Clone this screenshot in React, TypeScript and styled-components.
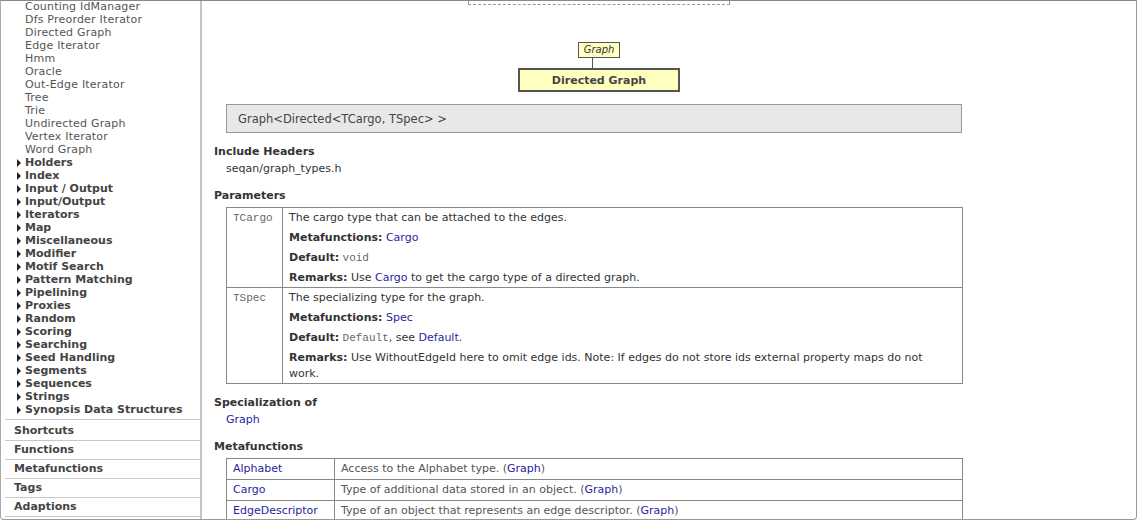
import React from "react";
import styled, { createGlobalStyle } from "styled-components";

const GlobalStyle = createGlobalStyle`
  html, body {
    margin: 0;
    padding: 0;
    background: #fff;
  }
  body {
    font-family: "DejaVu Sans", Verdana, sans-serif;
    font-size: 11px;
    color: #333;
  }
`;

const Frame = styled.div`
  box-sizing: border-box;
  width: 1137px;
  height: 520px;
  display: flex;
  border-top: 1px solid #888;
  border-left: 1px solid #aaa;
  border-right: 1px solid #999;
  border-bottom: 1px solid #999;
  border-radius: 0 0 4px 4px;
  overflow: hidden;
`;

const Sidebar = styled.nav`
  flex: 0 0 199px;
  border-right: 2px solid #c4c4c4;
  overflow: hidden;
  margin-top: -1px;
`;

const TreeList = styled.ul`
  list-style: none;
  margin: 0;
  padding: 0;
`;

const Leaf = styled.li`
  line-height: 13px;
  height: 13px;
  padding-left: 24px;
  color: #555;
  white-space: nowrap;
  letter-spacing: 0.2px;
`;

const Category = styled.li`
  display: flex;
  align-items: center;
  gap: 4px;
  line-height: 13px;
  height: 13px;
  padding-left: 16px;
  color: #444;
  font-weight: bold;
  white-space: nowrap;
`;

const Arrow = styled.span`
  width: 0;
  height: 0;
  border-left: 4px solid #222;
  border-top: 4px solid transparent;
  border-bottom: 4px solid transparent;
`;

const SectionList = styled.ul`
  list-style: none;
  margin: 3px 0 0 4px;
  padding: 1px 0 0;
  border-top: 1px solid #c8c8c8;
`;

const Section = styled.li<{ $first?: boolean }>`
  height: ${({ $first }) => ($first ? 19 : 18)}px;
  line-height: ${({ $first }) => ($first ? 19 : 18)}px;
  padding-left: 9px;
  border-bottom: 1px solid #c8c8c8;
  color: #444;
  font-weight: bold;
`;

const Main = styled.main`
  flex: 1;
  overflow: hidden;
  padding: 0 0 0 12px;
`;

const Diagram = styled.div`
  width: 746px;
  margin-left: 12px;
  display: flex;
  flex-direction: column;
  align-items: center;
`;

const DashedStub = styled.div`
  width: 260px;
  height: 3px;
  border: 1px dashed #999;
  border-top: none;
  margin-bottom: 37px;
`;

const SmallNode = styled.div`
  background: #ffffc0;
  border: 1px solid #555;
  font-style: italic;
  font-size: 10px;
  line-height: 14px;
  padding: 0 5px;
  color: #333;
`;

const Connector = styled.div`
  width: 1px;
  height: 10px;
  background: #555;
  transform: translateX(-7px);
`;

const MainNode = styled.div`
  box-sizing: border-box;
  width: 162px;
  height: 24px;
  background: #ffffc0;
  border: 2px solid #555;
  font-weight: bold;
  color: #444;
  display: flex;
  align-items: center;
  justify-content: center;
`;

const Signature = styled.div`
  box-sizing: border-box;
  width: 736px;
  height: 29px;
  margin: 12px 0 0 12px;
  padding: 0 11px;
  background: #e8e8e8;
  border: 1px solid #999;
  color: #444;
  display: flex;
  align-items: center;
  font-size: 11.5px;
`;

const Heading = styled.h3<{ $top: number }>`
  margin: ${({ $top }) => $top}px 0 0;
  font-size: 11px;
  line-height: 14px;
  font-weight: bold;
  color: #333;
`;

const Indented = styled.div`
  margin: 3px 0 0 12px;
  line-height: 14px;
  color: #333;
`;

const Link = styled.a`
  color: #1f1f9e;
  text-decoration: none;
`;

const Table = styled.table`
  width: 737px;
  margin: 4px 0 0 12px;
  border-collapse: collapse;
`;

const NameCell = styled.td<{ $w: number }>`
  width: ${({ $w }) => $w}px;
  vertical-align: top;
  border: 1px solid #888;
  padding: 2px 6px 1px;
  line-height: 16px;
`;

const DescCell = styled.td`
  vertical-align: top;
  border: 1px solid #888;
  padding: 2px 6px 1px;
  line-height: 16px;
  color: #333;
`;

const Mono = styled.span`
  font-family: "Liberation Mono", "Courier New", monospace;
  font-size: 11px;
  color: #666;
`;

const Para = styled.div`
  margin-bottom: 4px;
  &:last-child {
    margin-bottom: 0;
  }
`;

const Label = styled.b`
  color: #333;
`;

const MfName = styled.td`
  width: 95px;
  border: 1px solid #888;
  padding: 0 6px;
  height: 20px;
  line-height: 20px;
`;

const MfDesc = styled.td`
  border: 1px solid #888;
  padding: 0 6px;
  height: 20px;
  line-height: 20px;
  color: #555;
`;

const leaves = [
  "Counting IdManager",
  "Dfs Preorder Iterator",
  "Directed Graph",
  "Edge Iterator",
  "Hmm",
  "Oracle",
  "Out-Edge Iterator",
  "Tree",
  "Trie",
  "Undirected Graph",
  "Vertex Iterator",
  "Word Graph",
];

const categories = [
  "Holders",
  "Index",
  "Input / Output",
  "Input/Output",
  "Iterators",
  "Map",
  "Miscellaneous",
  "Modifier",
  "Motif Search",
  "Pattern Matching",
  "Pipelining",
  "Proxies",
  "Random",
  "Scoring",
  "Searching",
  "Seed Handling",
  "Segments",
  "Sequences",
  "Strings",
  "Synopsis Data Structures",
];

const sections = ["Shortcuts", "Functions", "Metafunctions", "Tags", "Adaptions"];

const metafunctions = [
  { name: "Alphabet", desc: "Access to the Alphabet type." },
  { name: "Cargo", desc: "Type of additional data stored in an object." },
  { name: "EdgeDescriptor", desc: "Type of an object that represents an edge descriptor." },
  { name: "EdgeIdHandler", desc: "Type of an object that represents an Id Manager for edges." },
];

const App: React.FC = () => {
  return (
    <>
      <GlobalStyle />
      <Frame>
        <Sidebar>
          <TreeList>
            {leaves.map((l) => (
              <Leaf key={l}>{l}</Leaf>
            ))}
            {categories.map((c) => (
              <Category key={c}>
                <Arrow />
                {c}
              </Category>
            ))}
          </TreeList>
          <SectionList>
            {sections.map((s, i) => (
              <Section key={s} $first={i === 0}>
                {s}
              </Section>
            ))}
          </SectionList>
        </Sidebar>
        <Main>
          <Diagram>
            <DashedStub />
            <SmallNode>Graph</SmallNode>
            <Connector />
            <MainNode>Directed Graph</MainNode>
          </Diagram>
          <Signature>Graph&lt;Directed&lt;TCargo, TSpec&gt; &gt;</Signature>

          <Heading $top={12}>Include Headers</Heading>
          <Indented>seqan/graph_types.h</Indented>

          <Heading $top={13}>Parameters</Heading>
          <Table>
            <tbody>
              <tr>
                <NameCell $w={43}>
                  <Mono>TCargo</Mono>
                </NameCell>
                <DescCell>
                  <Para>The cargo type that can be attached to the edges.</Para>
                  <Para>
                    <Label>Metafunctions:</Label> <Link>Cargo</Link>
                  </Para>
                  <Para>
                    <Label>Default:</Label> <Mono>void</Mono>
                  </Para>
                  <Para>
                    <Label>Remarks:</Label> Use <Link>Cargo</Link> to get the cargo type of a
                    directed graph.
                  </Para>
                </DescCell>
              </tr>
              <tr>
                <NameCell $w={43}>
                  <Mono>TSpec</Mono>
                </NameCell>
                <DescCell>
                  <Para>The specializing type for the graph.</Para>
                  <Para>
                    <Label>Metafunctions:</Label> <Link>Spec</Link>
                  </Para>
                  <Para>
                    <Label>Default:</Label> <Mono>Default</Mono>, see <Link>Default</Link>.
                  </Para>
                  <Para>
                    <Label>Remarks:</Label> Use WithoutEdgeId here to omit edge ids. Note: If
                    edges do not store ids external property maps do not work.
                  </Para>
                </DescCell>
              </tr>
            </tbody>
          </Table>

          <Heading $top={12}>Specialization of</Heading>
          <Indented>
            <Link>Graph</Link>
          </Indented>

          <Heading $top={13}>Metafunctions</Heading>
          <Table>
            <tbody>
              {metafunctions.map((m) => (
                <tr key={m.name}>
                  <MfName>
                    <Link>{m.name}</Link>
                  </MfName>
                  <MfDesc>
                    {m.desc} (<Link>Graph</Link>)
                  </MfDesc>
                </tr>
              ))}
            </tbody>
          </Table>
        </Main>
      </Frame>
    </>
  );
};

export default App;
